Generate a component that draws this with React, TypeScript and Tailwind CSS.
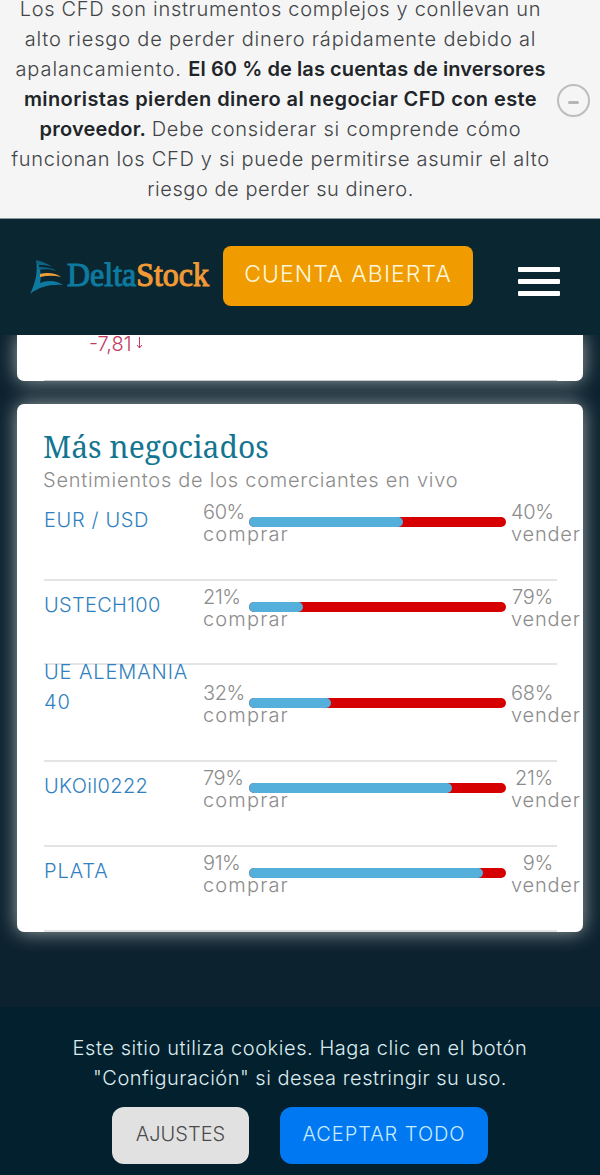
import { useState } from 'react'

const sentiments = [
  { name: ['EUR / USD'], buy: 60, row: 'h-[85px]', namePad: 'pt-[9px]', valuePad: 'pt-[5px]', tracking: 'tracking-[0.65px]' },
  { name: ['USTECH100'], buy: 21, row: 'h-[84px]', namePad: 'pt-[9px]', valuePad: 'pt-[5px]', tracking: 'tracking-[0.3px]' },
  { name: ['UE ALEMANIA', '40'], buy: 32, row: 'h-[97px]', namePad: '-mt-2', valuePad: 'pt-[17px]', tracking: 'tracking-[0.9px]' },
  { name: ['UKOil0222'], buy: 79, row: 'h-[85px]', namePad: 'pt-[9px]', valuePad: 'pt-[5px]', tracking: 'tracking-[0.4px]' },
  { name: ['PLATA'], buy: 91, row: 'h-[85px]', namePad: 'pt-[9px]', valuePad: 'pt-[5px]', tracking: 'tracking-[0.9px]' },
]

const Disclaimer = () => (
  <div className="h-[219px] overflow-hidden bg-[#f5f5f5] flex items-end border-b border-[#8797a0]">
    <p className="w-[561px] shrink-0 pb-[14px] text-center text-[20px] leading-[30px] text-[#424447] whitespace-nowrap">
      <span className="tracking-[0.7px]">Los CFD son instrumentos complejos y conllevan un</span>
      <br />
      <span className="tracking-[0.82px]">alto riesgo de perder dinero rápidamente debido al</span>
      <br />
      <span className="tracking-[0.9px]">apalancamiento. </span>
      <strong className="font-semibold text-[#212529]">
        <span className="tracking-[0.08px]">El 60 % de las cuentas de inversores</span>
        <br />
        <span className="tracking-[0.42px]">minoristas pierden dinero al negociar CFD con este</span>
        <br />
        <span className="tracking-[0.2px]">proveedor.</span>
      </strong>{' '}
      <span className="tracking-[0.76px]">Debe considerar si comprende cómo</span>
      <br />
      <span className="tracking-[0.69px]">funcionan los CFD y si puede permitirse asumir el alto</span>
      <br />
      <span className="tracking-[0.55px]">riesgo de perder su dinero.</span>
    </p>
    <button
      aria-label="Minimizar"
      className="-ml-1 mb-[101px] h-[33px] w-[33px] shrink-0 rounded-full border-2 border-[#bdbdbd] flex items-center justify-center"
    >
      <span className="mt-[3px] h-[3px] w-[11px] rounded-sm bg-[#b5b5b5]" />
    </button>
  </div>
)

const Logo = () => (
  <svg width="184" height="46" viewBox="0 0 184 46" className="shrink-0">
    {/* Sail */}
    <path d="M6 4 C8 14 6 26 0 38 C9 31 20 28 33 29 C26 24 17 24 10 27 C12 19 10 10 6 4Z" fill="#0e7a9f" />
    <path d="M6 4 C13 6 19 8 22 11 C17 9 13 9 8 9Z" fill="#0e6283" />
    <path d="M8 11 C16 11 22 12 27 15 C20 13 15 13 9 14Z" fill="#0e6283" />
    <path d="M10 18 C17 16 26 17 31 21 C24 19 17 19.500 10 21Z" fill="#efa036" />
    <text
      y="30"
      x="37"
      fontFamily="Liberation Serif, serif"
      fontSize="34"
      fontWeight="400"
      strokeWidth="1.1"
      textLength="142"
      lengthAdjust="spacingAndGlyphs"
    >
      <tspan fill="#0e7a9f" stroke="#0e7a9f">Delta</tspan>
      <tspan fill="#f19a35" stroke="#f19a35">Stock</tspan>
    </text>
  </svg>
)

const Header = () => (
  <header className="relative h-[116px] bg-[#0a2731] flex items-start pl-[30px]">
    <div className="pt-[37px] w-[193px] shrink-0">
      <Logo />
    </div>
    <button className="mt-[27px] h-[60px] w-[250px] rounded-lg bg-[#f09c00] pb-[3px] text-[23px] tracking-[1.1px] text-[#fff6dc]">
      CUENTA ABIERTA
    </button>
    <button aria-label="Menú" className="mt-[48px] ml-[45px] flex w-[42px] flex-col gap-[7px]">
      <span className="h-[5px] rounded-[1px] bg-white" />
      <span className="h-[5px] rounded-[1px] bg-white" />
      <span className="h-[5px] rounded-[1px] bg-white" />
    </button>
  </header>
)

const SentimentRow = ({ item }) => (
  <li className={`${item.row} flex w-[513px] border-b-2 border-[#e3e4e5]`}>
    <div
      className={`${item.namePad} ${item.tracking} w-[159px] shrink-0 text-[20px] leading-[30px] text-[#2f80c0] whitespace-nowrap`}
    >
      {item.name.map((line) => (
        <div key={line}>{line}</div>
      ))}
    </div>
    <div className={`${item.valuePad} flex shrink-0 text-[20px] leading-[22px] text-[#8c8c8c]`}>
      <div className="w-[46px]">
        <div className="tracking-[-0.4px]">{item.buy}%</div>
        <div className="tracking-[1.15px]">comprar</div>
      </div>
      <div className="mt-4 flex h-[10px] w-[257px] overflow-hidden rounded-full bg-[#d60000]">
        <div className="h-full rounded-r-full bg-[#54afdb]" style={{ width: `${item.buy}%` }} />
      </div>
      <div className="ml-[5px] w-[69px]">
        <div className="w-[42px] text-right tracking-[-0.3px]">{100 - item.buy}%</div>
        <div className="tracking-[0.8px]">vender</div>
      </div>
    </div>
  </li>
)

const CookieBar = ({ onClose }) => (
  <div className="h-[168px] bg-[#02202d] pt-[26px] text-center text-[20px] leading-[30px] text-[#dcebee] whitespace-nowrap">
    <p>
      <span className="tracking-[0.57px]">Este sitio utiliza cookies. Haga clic en el botón</span>
      <br />
      <span className="tracking-[0.49px]">"Configuración" si desea restringir su uso.</span>
    </p>
    <div className="mt-[14px] flex justify-center gap-[31px]">
      <button className="h-[57px] w-[137px] rounded-xl bg-[#e1e1e1] pb-[3px] text-[#4b4b4b]">AJUSTES</button>
      <button
        onClick={onClose}
        className="h-[57px] w-[208px] rounded-xl bg-[#0078f2] pb-[3px] tracking-[0.95px] text-[#c9ecff]"
      >
        ACEPTAR TODO
      </button>
    </div>
  </div>
)

const App = () => {
  const [showCookies, setShowCookies] = useState(true)

  return (
    <div className="h-[1175px] w-[600px] overflow-hidden bg-[#0c222e] font-['Inter',sans-serif] font-light">
      <Disclaimer />
      <Header />
      <main className="h-[672px] overflow-hidden px-[17px]">
        <section className="h-[46px] rounded-b-[7px] bg-white px-[27px] shadow-[0_0_20px_rgba(255,255,255,0.6)]">
          <div className="flex h-[46px] w-[513px] gap-1 border-b border-[#c5cbce] pl-[45px] text-[20px] leading-[18px] text-[#c23a5c]">
            <span>-7,81</span>
            <svg width="7" height="12" viewBox="0 0 7 12" className="mt-[2px]" fill="none" stroke="currentColor">
              <path d="M3.5 0V11M1 8L3.5 11L6 8" />
            </svg>
          </div>
        </section>
        <section className="mt-[23px] h-[528px] rounded-[7px] bg-white pl-[27px] pt-6 shadow-[0_0_20px_rgba(255,255,255,0.6)]">
          <h2 className="h-[38px] -ml-px font-['Noto_Serif','DejaVu_Serif_Condensed','DejaVu_Serif',serif] text-[30px] font-normal leading-[38px] text-[#137590]">
            Más negociados
          </h2>
          <p className="-ml-px h-[30px] text-[20px] leading-[29px] tracking-[0.74px] text-[#8c8c8c]">
            Sentimientos de los comerciantes en vivo
          </p>
          <ul>
            {sentiments.map((item) => (
              <SentimentRow key={item.buy} item={item} />
            ))}
          </ul>
        </section>
      </main>
      {showCookies && <CookieBar onClose={() => setShowCookies(false)} />}
    </div>
  )
}

export default App
